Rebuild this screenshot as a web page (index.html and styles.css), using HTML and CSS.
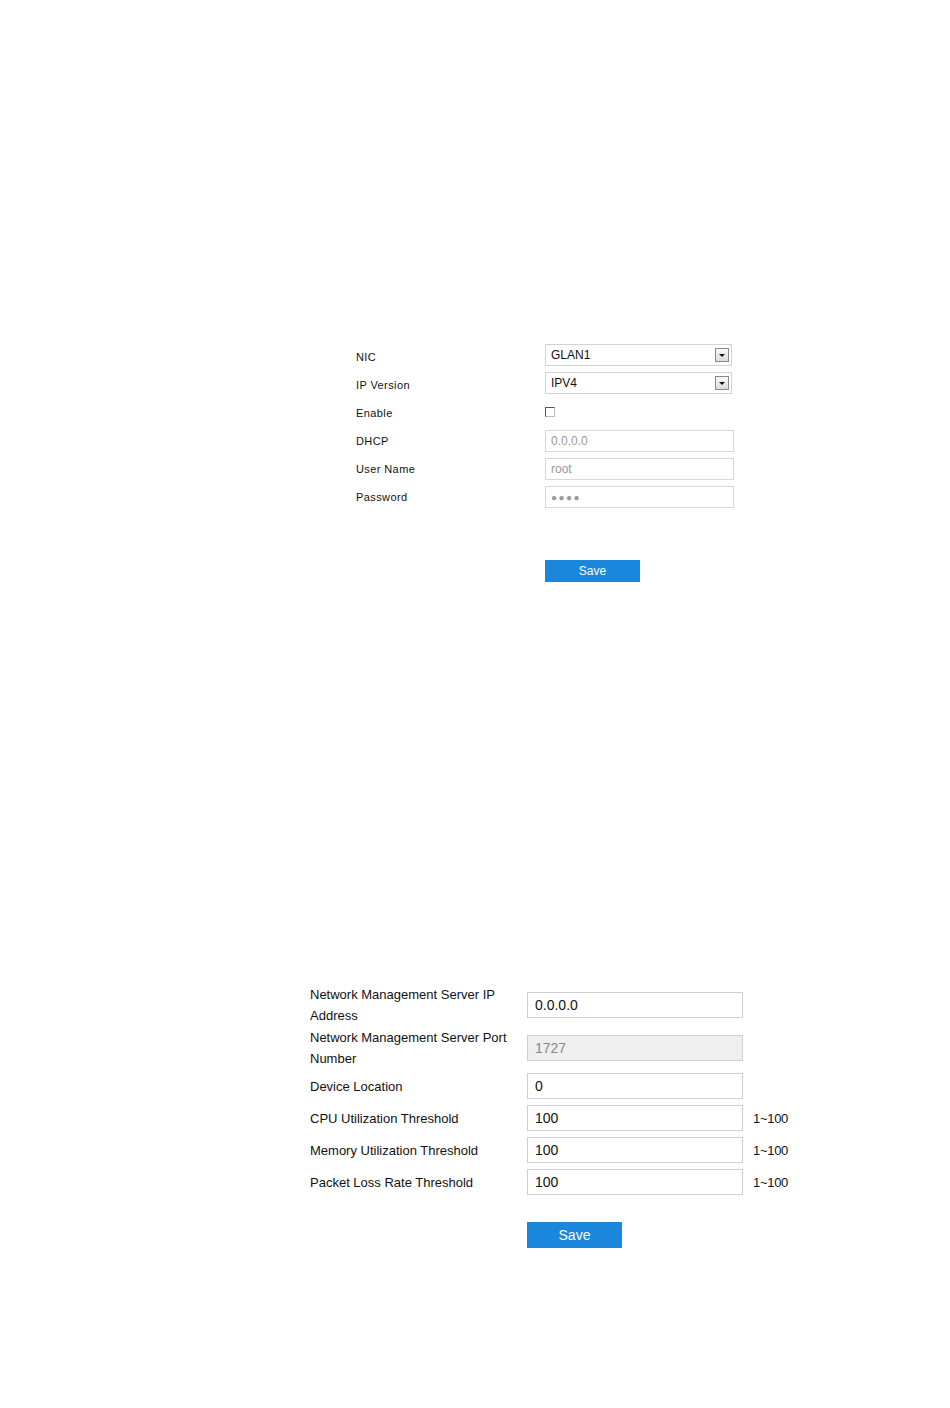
FILE: index.html
```html
<!DOCTYPE html>
<html lang="en">
<head>
  <meta charset="UTF-8">
  <title>Network Settings</title>
  <link rel="stylesheet" href="styles.css">
</head>
<body>
  <div class="page">
    <form class="nic-form">
      <div class="row">
        <label>NIC</label>
        <div class="select"><span>GLAN1</span><span class="arrow"></span></div>
      </div>
      <div class="row">
        <label>IP Version</label>
        <div class="select"><span>IPV4</span><span class="arrow"></span></div>
      </div>
      <div class="row">
        <label>Enable</label>
        <span class="check"></span>
      </div>
      <div class="row">
        <label>DHCP</label>
        <input class="field" type="text" value="0.0.0.0" disabled>
      </div>
      <div class="row">
        <label>User Name</label>
        <input class="field" type="text" value="root" disabled>
      </div>
      <div class="row">
        <label>Password</label>
        <input class="field pass" type="text" value="&#9679;&#9679;&#9679;&#9679;" disabled>
      </div>
      <div class="actions">
        <button type="button" class="btn">Save</button>
      </div>
    </form>

    <form class="nms-form">
      <div class="row tall">
        <label>Network Management Server IP Address</label>
        <input class="field" type="text" value="0.0.0.0">
      </div>
      <div class="row tall">
        <label>Network Management Server Port Number</label>
        <input class="field locked" type="text" value="1727" readonly>
      </div>
      <div class="row">
        <label>Device Location</label>
        <input class="field" type="text" value="0">
      </div>
      <div class="row">
        <label>CPU Utilization Threshold</label>
        <input class="field" type="text" value="100">
        <span class="range">1~100</span>
      </div>
      <div class="row">
        <label>Memory Utilization Threshold</label>
        <input class="field" type="text" value="100">
        <span class="range">1~100</span>
      </div>
      <div class="row">
        <label>Packet Loss Rate Threshold</label>
        <input class="field" type="text" value="100">
        <span class="range">1~100</span>
      </div>
      <div class="actions">
        <button type="button" class="btn">Save</button>
      </div>
    </form>
  </div>
</body>
</html>
```

FILE: styles.css
```css
* {
  box-sizing: border-box;
  margin: 0;
  padding: 0;
}

body {
  font-family: "Liberation Sans", Arial, sans-serif;
  background: #fff;
  color: #111;
}

/* top form: NIC settings */
.nic-form {
  padding: 343px 0 0 356px;
}

.nic-form .row {
  display: grid;
  grid-template-columns: 189px 189px;
  align-items: center;
  height: 28px;
}

.nic-form label {
  font-size: 11px;
  letter-spacing: 0.4px;
}

.select {
  width: 187px;
  height: 22px;
  margin-bottom: 4px;
  border: 1px solid #d3d3d3;
  display: flex;
  align-items: center;
  justify-content: space-between;
  padding: 0 2px 0 5px;
  font-size: 12px;
}

.arrow {
  width: 14px;
  height: 14px;
  border: 1px solid #8a8a8a;
  background: linear-gradient(#fafafa, #dcdcdc);
  position: relative;
}

.arrow::after {
  content: "";
  position: absolute;
  left: 3px;
  top: 5px;
  border-left: 3px solid transparent;
  border-right: 3px solid transparent;
  border-top: 3px solid #111;
}

.check {
  width: 10px;
  height: 10px;
  border-top: 1px solid #555;
  border-left: 1px solid #555;
  border-right: 1px solid #bbb;
  border-bottom: 1px solid #bbb;
  margin-top: -2px;
}

.nic-form .field {
  width: 189px;
  height: 22px;
  border: 1px solid #d8d8d8;
  background: #fff;
  padding: 0 5px;
  font-family: inherit;
  font-size: 12px;
  color: #999;
}

.nic-form .pass {
  font-size: 10px;
  letter-spacing: 1.5px;
  color: #9a9a9a;
}

.nic-form .actions {
  padding: 49px 0 0 189px;
}

.btn {
  width: 95px;
  height: 22px;
  border: none;
  background-color: #1a86dc;
  color: #fff;
  font-family: inherit;
  font-size: 12px;
  cursor: pointer;
}

/* bottom form: network management */
.nms-form {
  padding: 402px 0 0 310px;
}

.nms-form .row {
  display: grid;
  grid-template-columns: 217px 216px auto;
  align-items: center;
  min-height: 32px;
}

.nms-form .row.tall {
  padding-bottom: 1px;
}

.nms-form label {
  font-size: 13px;
  line-height: 21px;
  max-width: 205px;
}

.nms-form .field {
  width: 216px;
  height: 26px;
  border: 1px solid #cfcfcf;
  padding: 0 7px;
  font-family: inherit;
  font-size: 14px;
  color: #111;
  outline: none;
}

.nms-form .field.locked {
  background: #efefef;
  color: #888;
}

.range {
  font-size: 13px;
  letter-spacing: -0.3px;
  padding-left: 10px;
}

.nms-form .actions {
  padding: 24px 0 0 217px;
}

.nms-form .btn {
  height: 26px;
  font-size: 14px;
}
```
